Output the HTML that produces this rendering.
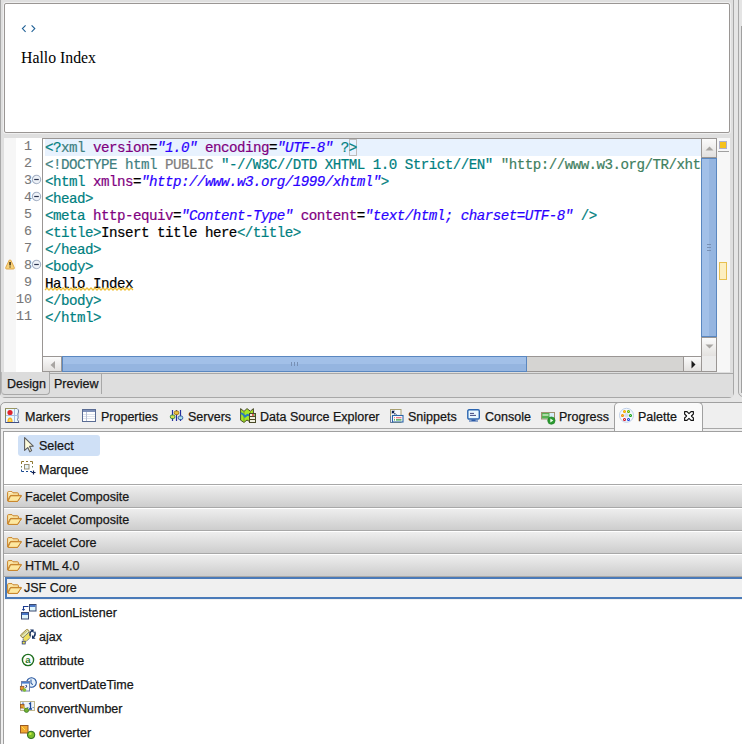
<!DOCTYPE html>
<html><head><meta charset="utf-8">
<style>
*{margin:0;padding:0;box-sizing:border-box}
html,body{width:742px;height:744px;overflow:hidden;background:#e6e6e6;font-family:"Liberation Sans",sans-serif;font-size:12.5px;color:#161616;-webkit-text-stroke:0.25px}
.a{position:absolute}
svg{position:absolute;overflow:visible}
#frame{left:0;top:-10px;width:734px;height:408px;border:1px solid #a8a8a8;border-radius:0 0 5px 5px;background:#dfdfdf}
#rframe{left:738px;top:-10px;width:20px;height:407px;border:1px solid #a8a8a8;border-radius:0 0 5px 5px;background:#e4e4e4}
#prev{left:4px;top:3px;width:726px;height:130px;border:1px solid #9a9694;border-radius:2px;background:#fff;box-shadow:0 0 0 1px #efefef}
#src{left:4px;top:138px;width:726px;height:234px;background:#f6f6f6}
#lnr{left:16px;top:138px;width:26px;height:234px;background:#fff}
#code{left:42px;top:138px;width:659px;height:218px;border-left:1px solid #9a9694;border-top:1px solid #9a9694;background:#fff;overflow:hidden}
.ln{position:absolute;left:0;width:32px;-webkit-text-stroke:0.1px;text-align:right;font-family:"Liberation Mono",monospace;font-size:13.33px;line-height:17px;color:#787878}
.cl{position:absolute;left:2px;margin-top:1px;-webkit-text-stroke:0.2px;white-space:pre;font-family:"Liberation Mono",monospace;font-size:14.2px;letter-spacing:-0.52px;line-height:17px;color:#000}
.t{color:#008080}.tn{color:#3f7f7f}.an{color:#7f007f}.av{color:#2a00ff;font-style:italic}.g{color:#808080}.sr{color:#3f7f5f}
#vsb{left:701px;top:138px;width:16px;height:218px;background:#e6e6e6;border:1px solid #9a9694;border-bottom:none}
.btn{position:absolute;background:linear-gradient(#fbfbfb,#e2e0de)}
#ovr{left:717px;top:138px;width:13px;height:234px;background:#f7f7f7}
#hsb{left:42px;top:356px;width:659px;height:16px;background:#d5d4d2;border:1px solid #9a9694;border-right:none}
#tabs1{left:1px;top:372px;width:732px;height:25px;background:#dedede}
#bpanel{left:0;top:402px;width:760px;height:360px;border:1px solid #a0a0a0;border-radius:5px 5px 0 0;background:#efefef}
#pal{left:3px;top:431px;width:760px;height:320px;border-left:1px solid #a0a0a0;border-top:1px solid #a0a0a0;background:#fff}
.tab{position:absolute;top:405px;height:25px;line-height:25px;white-space:nowrap}
.dr{position:absolute;left:4px;width:740px;height:23px;border-top:1px solid #a8a8a8;background:linear-gradient(#fff 0,#fff 1px,#eeeeee 1px,#cdcdcd 100%)}
.dr span{position:absolute;left:21px;top:5px;line-height:15px}
.it{position:absolute;left:39px;height:24px;line-height:24px}
</style></head><body>
<div class="a" id="frame"></div>
<div class="a" id="rframe"></div><div class="a" style="left:741px;top:26px;width:1px;height:367px;background:#a0a0a0"></div>
<div class="a" id="prev"></div>
<svg style="left:21px;top:24px" width="16" height="10" viewBox="0 0 16 10"><path d="M4.6 1.3 L1.4 4.6 L4.6 7.9 M10.6 1.3 L13.8 4.6 L10.6 7.9" fill="none" stroke="#1f6096" stroke-width="1.1"/></svg>
<div class="a" style="left:21px;top:49px;font-family:'Liberation Serif',serif;font-size:15.8px;color:#000;-webkit-text-stroke:0">Hallo Index</div>
<div class="a" id="src"></div>
<div class="a" id="lnr"></div>
<div class="a" style="left:0;top:138px">
<div class="ln" style="top:0">1</div>
<div class="ln" style="top:17px">2</div>
<div class="ln" style="top:34px">3</div>
<div class="ln" style="top:51px">4</div>
<div class="ln" style="top:68px">5</div>
<div class="ln" style="top:85px">6</div>
<div class="ln" style="top:102px">7</div>
<div class="ln" style="top:119px">8</div>
<div class="ln" style="top:136px">9</div>
<div class="ln" style="top:153px">10</div>
<div class="ln" style="top:170px">11</div>
</div>
<!-- fold markers -->
<svg style="left:32px;top:175px" width="10" height="10" viewBox="0 0 10 10"><circle cx="4.5" cy="4.5" r="4.2" fill="#eef2f8" stroke="#a4b0c4" stroke-width="1.1"/><path d="M2.2 4.5H6.8" stroke="#2a3450" stroke-width="1.2"/></svg>
<svg style="left:32px;top:192px" width="10" height="10" viewBox="0 0 10 10"><circle cx="4.5" cy="4.5" r="4.2" fill="#eef2f8" stroke="#a4b0c4" stroke-width="1.1"/><path d="M2.2 4.5H6.8" stroke="#2a3450" stroke-width="1.2"/></svg>
<svg style="left:32px;top:260px" width="10" height="10" viewBox="0 0 10 10"><circle cx="4.5" cy="4.5" r="4.2" fill="#eef2f8" stroke="#a4b0c4" stroke-width="1.1"/><path d="M2.2 4.5H6.8" stroke="#2a3450" stroke-width="1.2"/></svg>
<!-- warning -->
<svg style="left:5px;top:259px" width="10" height="11" viewBox="0 0 10 11"><path d="M5 0.8 Q5.6 0.8 6 1.6 L9.3 8.6 Q9.6 10 8.4 10 L1.6 10 Q0.4 10 0.7 8.6 L4 1.6 Q4.4 0.8 5 0.8Z" fill="#f7d27a" stroke="#dca040" stroke-width="0.9"/><rect x="4.3" y="3" width="1.5" height="3.4" fill="#3a2a10"/><rect x="4.3" y="7.3" width="1.5" height="1.4" fill="#7a6a40"/></svg>
<div class="a" id="code">
<div style="position:absolute;left:2px;top:0;width:657px;height:17px;background:#e8f2fe"></div>
<div style="position:absolute;left:306px;top:0;width:8px;height:17px;border:1px solid #bdbdbd"></div>
<div class="cl" style="top:0"><span class="t">&lt;?</span><span class="tn">xml</span> <span class="an">version</span>=<span class="av">"1.0"</span> <span class="an">encoding</span>=<span class="av">"UTF-8"</span> <span class="t">?&gt;</span></div>
<div class="cl" style="top:17px"><span class="tn">&lt;!DOCTYPE html</span> <span class="g">PUBLIC</span> <span class="t">"-//W3C//DTD XHTML 1.0 Strict//EN"</span> <span class="sr">"http://www.w3.org/TR/xhtml1/DTD/xhtml1-strict.dtd"&gt;</span></div>
<div class="cl" style="top:34px"><span class="t">&lt;html</span> <span class="an">xmlns</span>=<span class="av">"http://www.w3.org/1999/xhtml"</span><span class="t">&gt;</span></div>
<div class="cl" style="top:51px"><span class="t">&lt;head&gt;</span></div>
<div class="cl" style="top:68px"><span class="t">&lt;meta</span> <span class="an">http-equiv</span>=<span class="av">"Content-Type"</span> <span class="an">content</span>=<span class="av">"text/html; charset=UTF-8"</span> <span class="t">/&gt;</span></div>
<div class="cl" style="top:85px"><span class="t">&lt;title&gt;</span>Insert title here<span class="t">&lt;/title&gt;</span></div>
<div class="cl" style="top:102px"><span class="t">&lt;/head&gt;</span></div>
<div class="cl" style="top:119px"><span class="t">&lt;body&gt;</span></div>
<div class="cl" style="top:136px">Hallo Index</div>
<div class="cl" style="top:153px"><span class="t">&lt;/body&gt;</span></div>
<div class="cl" style="top:170px"><span class="t">&lt;/html&gt;</span></div>
<svg style="left:2px;top:148px" width="89" height="4" viewBox="0 0 89 4"><path d="M0 3 L2 1 L4 3 L6 1 L8 3 L10 1 L12 3 L14 1 L16 3 L18 1 L20 3 L22 1 L24 3 L26 1 L28 3 L30 1 L32 3 L34 1 L36 3 L38 1 L40 3 L42 1 L44 3 L46 1 L48 3 L50 1 L52 3 L54 1 L56 3 L58 1 L60 3 L62 1 L64 3 L66 1 L68 3 L70 1 L72 3 L74 1 L76 3 L78 1 L80 3 L82 1 L84 3 L86 1 L88 3" fill="none" stroke="#efbf38" stroke-width="1.3"/></svg>
</div>
<div class="a" id="vsb">
<div class="btn" style="left:0;top:0;width:14px;height:19px;border-bottom:1px solid #9a9694"></div>
<svg style="left:3px;top:7px" width="9" height="5" viewBox="0 0 9 5"><path d="M0.5 4.5 L4.5 0.5 L8.5 4.5Z" fill="#a8a5a2"/></svg>
<div style="position:absolute;left:-1px;top:19px;width:16px;height:179px;background:linear-gradient(90deg,#a2c0e8 0,#a2c0e8 50%,#95b5e0 50%,#95b5e0 100%);border:1px solid #5a87c0"></div>
<div style="position:absolute;left:5px;top:105px;width:4px;height:1px;background:#7890b4;box-shadow:0 3px 0 #7890b4,0 6px 0 #7890b4"></div><div class="btn" style="left:0;top:198px;width:14px;height:20px;border-top:1px solid #9a9694"></div>
<svg style="left:3px;top:205px" width="9" height="5" viewBox="0 0 9 5"><path d="M0.5 0.5 L4.5 4.5 L8.5 0.5Z" fill="#a8a5a2"/></svg>
</div>
<div class="a" id="ovr"><div style="position:absolute;left:2px;top:3px;width:8px;height:8px;background:#f6c21c;border:1px solid #b0b0c8"></div><div style="position:absolute;left:1px;top:13px;width:11px;height:1px;background:#a0a0a0"></div><div style="position:absolute;left:2px;top:124px;width:8px;height:18px;background:#fdefc0;border:1px solid #e8c050"></div></div>
<div class="a" id="hsb">
<div class="btn" style="left:0;top:0;width:19px;height:14px;border-right:1px solid #9a9694"></div>
<svg style="left:7px;top:4px" width="5" height="8" viewBox="0 0 5 8"><path d="M5 0 L0.5 4 L5 8Z" fill="#a8a5a2"/></svg>
<div style="position:absolute;left:19px;top:-1px;width:465px;height:16px;background:linear-gradient(#a2c0e8 0,#a2c0e8 50%,#95b5e0 50%,#95b5e0 100%);border:1px solid #5a87c0"></div><div style="position:absolute;left:248px;top:5px;width:1px;height:4px;background:#7890b4;box-shadow:3px 0 0 #7890b4,6px 0 0 #7890b4"></div>
<div class="btn" style="left:640px;top:0;width:18px;height:14px;border-left:1px solid #9a9694"></div>
<svg style="left:648px;top:3px" width="5" height="9" viewBox="0 0 5 9"><path d="M0.5 0.5 L4.5 4.5 L0.5 8.5Z" fill="#1a1a1a"/></svg>
</div>
<div class="a" style="left:701px;top:356px;width:16px;height:16px;background:#ebebeb;border-left:1px solid #9a9694;border-right:1px solid #9a9694;border-bottom:1px solid #9a9694"></div>
<div class="a" id="tabs1"></div>
<div class="a" style="left:49px;top:373px;width:684px;height:1px;background:#a8a8a8"></div>
<div class="a" style="left:1px;top:372px;width:49px;height:23px;border-left:1px solid #b8b8b8;border-right:1px solid #a8a8a8;border-bottom:1px solid #a8a8a8;border-radius:0 0 4px 4px;background:#dcdcdc"></div>
<div class="a" style="left:101px;top:374px;width:1px;height:20px;background:#a8a8a8"></div>
<div class="a" style="left:7px;top:374px;height:20px;line-height:20px">Design</div>
<div class="a" style="left:54px;top:374px;height:20px;line-height:20px">Preview</div>
<div class="a" id="bpanel"></div>
<div class="a" style="left:1px;top:428px;width:760px;height:1px;background:#a8a8a8"></div>
<div class="a" style="left:614px;top:402px;width:89px;height:30px;border:1px solid #a0a0a0;border-bottom:none;border-radius:5px 5px 0 0;background:#fafafa"></div>
<div class="a" id="pal"></div>
<!-- Markers icon -->
<svg style="left:5px;top:408px" width="15" height="15" viewBox="0 0 15 15">
<path d="M0.5 0.5 H12 Q14 1.5 13.5 4 Q12.5 6 13 8 Q13.5 10 12.5 11.5 L14 14.5 H0.5Z" fill="#eaf8fe" stroke="#6d7aa0" stroke-width="1"/>
<path d="M0.5 0.5 H11.5" stroke="#9a9660" stroke-width="1"/><path d="M0.5 0.5 V10" stroke="#8a8a50" stroke-width="1"/>
<path d="M1 7.5 H13 M9.5 1 V14" stroke="#a8bce0" stroke-width="1"/>
<circle cx="5" cy="4.5" r="2.6" fill="#e0242c"/>
<path d="M2.4 14 Q2.4 9.5 5 9.5 Q7.6 9.5 7.6 14Z" fill="#f8b020"/>
<path d="M3.4 13.5 Q3.6 11 5 11 Q6.4 11 6.6 13.5Z" fill="#fde060"/>
<path d="M0.5 14.5 H14" stroke="#404e80" stroke-width="1"/>
</svg>
<div class="tab" style="left:25px">Markers</div>
<!-- Properties icon -->
<svg style="left:82px;top:409px" width="14" height="13" viewBox="0 0 14 13">
<rect x="0.5" y="0.5" width="13" height="12" fill="#fff" stroke="#5a6c94"/>
<rect x="1" y="1" width="12" height="2" fill="#7e90b8"/>
<path d="M1 5.5H13 M1 7.5H13 M1 9.5H13" stroke="#dde2ec" stroke-width="1"/>
<path d="M4.5 3 V12" stroke="#b8c0d4" stroke-width="1"/>
</svg>
<div class="tab" style="left:101px">Properties</div>
<!-- Servers icon -->
<svg style="left:170px;top:409px" width="14" height="13" viewBox="0 0 14 13">
<path d="M2.5 1V12 M6.5 1V12 M10.5 1V12" stroke="#2430a0" stroke-width="1.2"/>
<rect x="0.3" y="6" width="4.6" height="3.6" rx="1.6" fill="#d8e050" stroke="#2a8040" stroke-width="0.9"/>
<rect x="4.2" y="2" width="4.6" height="3.6" rx="1.6" fill="#e8c040" stroke="#a07010" stroke-width="0.9"/>
<rect x="8.2" y="7" width="4.6" height="3.6" rx="1.6" fill="#a8e0e8" stroke="#3050a0" stroke-width="0.9"/>
</svg>
<div class="tab" style="left:188px">Servers</div>
<!-- DSE icon -->
<svg style="left:240px;top:408px" width="16" height="15" viewBox="0 0 16 15">
<path d="M0.6 0.6 L4 3.4 L7 0.6 L10.4 3.2 L13.4 0.6 L13.4 12 L10.4 14.2 L7 12 L4 14.4 L0.6 12.2Z" fill="#a8e828" stroke="#4a4a30" stroke-width="1"/>
<path d="M4 3.4V14.4 M10.4 3.2V14.2" stroke="#78a820" stroke-width="1"/>
<path d="M0.8 5.2 L3 6.2 L5 8.6 L7.5 6.8 L10 7.6" fill="none" stroke="#2a7ac0" stroke-width="2"/>
<rect x="9.5" y="5.5" width="6" height="9" fill="#efefdf" stroke="#4a4a28" stroke-width="1"/>
<path d="M9.5 8.5H15.5 M9.5 11.5H15.5" stroke="#4a4a28" stroke-width="1"/>
<circle cx="13" cy="7" r="0.9" fill="#e02020"/><circle cx="14.4" cy="7" r="0.7" fill="#40c040"/>
</svg>
<div class="tab" style="left:260px">Data Source Explorer</div>
<!-- Snippets icon -->
<svg style="left:390px;top:409px" width="14" height="14" viewBox="0 0 14 14">
<rect x="0.5" y="0.5" width="10.5" height="13" fill="#f6f8fc" stroke="#a8a070" stroke-width="1"/>
<path d="M0.5 7 V13.5 H3" stroke="#6a7ca0" stroke-width="1" fill="none"/>
<path d="M3 3 L6.5 6.5" stroke="#102050" stroke-width="1.3" stroke-dasharray="1.3 0.7"/><path d="M1.8 1.8 H5 L1.8 5Z" fill="#0a1a48"/>
<rect x="2.5" y="6.5" width="10.5" height="6.5" fill="#fff" stroke="#2a64a8" stroke-width="1.1"/>
<path d="M4 8.7H5 M6 8.7H11.5" stroke="#e85060" stroke-width="1.1"/>
<path d="M4 10.9H5 M6 10.9H11.5" stroke="#30a040" stroke-width="1.1"/>
</svg>
<div class="tab" style="left:408px">Snippets</div>
<!-- Console icon -->
<svg style="left:467px;top:409px" width="13" height="13" viewBox="0 0 13 13">
<rect x="0.8" y="0.8" width="11.5" height="9.2" rx="1.2" fill="#e8f8ff" stroke="#2a64b0" stroke-width="1.4"/>
<path d="M3 4.4H7 M3 6.4H9" stroke="#404880" stroke-width="1"/>
<path d="M4.5 10.5H8.5 V11.5 H11 V12.5 H2 V11.5 H4.5Z" fill="#2a5aa8"/>
</svg>
<div class="tab" style="left:485px">Console</div>
<!-- Progress icon -->
<svg style="left:541px;top:412px" width="15" height="13" viewBox="0 0 15 13">
<rect x="0.5" y="0.5" width="13" height="6.5" fill="#d8eefa" stroke="#a09070" stroke-width="1"/>
<rect x="1" y="1" width="7.5" height="5.5" fill="#58b050"/>
<path d="M1.5 3H7.5" stroke="#e8f8e0" stroke-width="1.2"/>
<circle cx="10.4" cy="8.6" r="3.7" fill="#2a9a30" stroke="#1a7a20" stroke-width="0.6"/>
<path d="M9.3 6.6 L12.3 8.6 L9.3 10.6Z" fill="#f0fff0"/>
</svg>
<div class="tab" style="left:559px">Progress</div>
<!-- Palette icon -->
<svg style="left:619px;top:408px" width="15" height="15" viewBox="0 0 15 15">
<circle cx="7.5" cy="7.3" r="7" fill="#f4f8fe" stroke="#c0d0e8" stroke-width="1"/>
<circle cx="7.5" cy="7.3" r="2.2" fill="#d8e0ec"/>
<circle cx="5.5" cy="3.4" r="1.5" fill="#f0a000"/><circle cx="5.5" cy="3.4" r="0.5" fill="#ffee00"/>
<circle cx="9.5" cy="3.4" r="1.5" fill="#60b000"/><circle cx="9.5" cy="3.4" r="0.5" fill="#e0f080"/>
<circle cx="3.5" cy="7.4" r="1.5" fill="#f08800"/><circle cx="3.5" cy="7.4" r="0.5" fill="#ffd040"/>
<circle cx="11.5" cy="7.4" r="1.5" fill="#10a010"/><circle cx="11.5" cy="7.4" r="0.5" fill="#c0f0c0"/>
<circle cx="5.5" cy="11.5" r="1.5" fill="#d01020"/><circle cx="5.5" cy="11.5" r="0.5" fill="#fff"/>
<circle cx="9.5" cy="11.5" r="1.5" fill="#1040e0"/><circle cx="9.5" cy="11.5" r="0.5" fill="#fff"/>
</svg>
<div class="tab" style="left:638px">Palette</div>
<!-- close -->
<svg style="left:684px;top:411px" width="10" height="10" viewBox="0 0 10 10"><path d="M0.6 0.6 H3 L5 2.6 L7 0.6 H9.4 V3 L7.4 5 L9.4 7 V9.4 H7 L5 7.4 L3 9.4 H0.6 V7 L2.6 5 L0.6 3Z" fill="#fff" stroke="#111" stroke-width="1.1" stroke-linejoin="round"/></svg>
<!-- palette content -->
<div class="a" style="left:18px;top:435px;width:82px;height:21px;background:#cfe0f6;border-radius:3px"></div>
<svg style="left:24px;top:437px" width="10" height="16" viewBox="0 0 10 16"><path d="M0.6 0.6 L9.3 9.2 L5.6 9.4 L7.6 13.6 L5.8 14.8 L3.8 10.6 L0.6 13.4Z" fill="#fdfbdc" stroke="#5e5e5e" stroke-width="1.1" stroke-linejoin="round"/></svg>
<div class="it" style="top:434px">Select</div>
<svg style="left:21px;top:461px" width="15" height="15" viewBox="0 0 15 15">
<path d="M0.5 3V0.5H3 M5 0.5H7 M9 0.5H11.5V3" fill="none" stroke="#907830" stroke-width="1"/>
<path d="M0.5 5V6.5 M11.5 5V6.5" stroke="#708050" stroke-width="1"/>
<path d="M0.5 8.5V10.5H3 M5 10.5H7 M9 10.5H11" fill="none" stroke="#1a4a90" stroke-width="1"/>
<rect x="3.5" y="3.5" width="4.5" height="4.5" fill="#e8f4f8" stroke="#9a9070" stroke-width="1"/>
<path d="M10.5 11.5H14.5 M12.5 9.5V13.5" stroke="#102050" stroke-width="1.2"/>
</svg>
<div class="it" style="top:458px">Marquee</div>
<!-- drawers -->
<div class="dr" style="top:484px"><span>Facelet Composite</span></div>
<div class="dr" style="top:507px"><span>Facelet Composite</span></div>
<div class="dr" style="top:530px"><span>Facelet Core</span></div>
<div class="dr" style="top:553px"><span>HTML 4.0</span></div>
<div class="a" style="left:4px;top:576px;width:740px;height:24px;border-top:1px solid #a8a8a8;background:#f2f2f2"></div>
<div class="a" style="left:5px;top:577px;width:740px;height:22px;border:2px solid #4a7ab8;border-right:none;background:#f0f0f0"></div>
<div class="a" style="left:24px;top:581px;line-height:15px">JSF Core</div>
<svg style="left:7px;top:491px" width="15" height="11" viewBox="0 0 15 11"><path d="M0.6 9.8 V1.6 Q0.6 0.6 1.6 0.6 H5 L6 1.8 H10.6 Q11.4 1.8 11.4 2.8 V4.4 H4 Q3.2 4.4 2.8 5.2 L0.6 10 Q0.8 10.4 1.4 10.4 H10.6 L14.4 4.6 Q14.2 4.4 13.8 4.4 H11.4" fill="#fbe7a8" stroke="#c8842a" stroke-width="1"/><path d="M1.2 10.2 L3.8 5 H14 L10.4 10.2Z" fill="#fde8a0"/><path d="M1 10.2 L3.6 4.8 M3.6 4.8 H14.3 L10.5 10.4 H1.2" fill="none" stroke="#c8842a" stroke-width="1"/><path d="M1.6 1.4 H4.6" stroke="#fff" stroke-width="0.8"/></svg>
<svg style="left:7px;top:514px" width="15" height="11" viewBox="0 0 15 11"><path d="M0.6 9.8 V1.6 Q0.6 0.6 1.6 0.6 H5 L6 1.8 H10.6 Q11.4 1.8 11.4 2.8 V4.4 H4 Q3.2 4.4 2.8 5.2 L0.6 10 Q0.8 10.4 1.4 10.4 H10.6 L14.4 4.6 Q14.2 4.4 13.8 4.4 H11.4" fill="#fbe7a8" stroke="#c8842a" stroke-width="1"/><path d="M1.2 10.2 L3.8 5 H14 L10.4 10.2Z" fill="#fde8a0"/><path d="M1 10.2 L3.6 4.8 M3.6 4.8 H14.3 L10.5 10.4 H1.2" fill="none" stroke="#c8842a" stroke-width="1"/></svg>
<svg style="left:7px;top:537px" width="15" height="11" viewBox="0 0 15 11"><path d="M0.6 9.8 V1.6 Q0.6 0.6 1.6 0.6 H5 L6 1.8 H10.6 Q11.4 1.8 11.4 2.8 V4.4 H4 Q3.2 4.4 2.8 5.2 L0.6 10 Q0.8 10.4 1.4 10.4 H10.6 L14.4 4.6 Q14.2 4.4 13.8 4.4 H11.4" fill="#fbe7a8" stroke="#c8842a" stroke-width="1"/><path d="M1.2 10.2 L3.8 5 H14 L10.4 10.2Z" fill="#fde8a0"/><path d="M1 10.2 L3.6 4.8 M3.6 4.8 H14.3 L10.5 10.4 H1.2" fill="none" stroke="#c8842a" stroke-width="1"/></svg>
<svg style="left:7px;top:560px" width="15" height="11" viewBox="0 0 15 11"><path d="M0.6 9.8 V1.6 Q0.6 0.6 1.6 0.6 H5 L6 1.8 H10.6 Q11.4 1.8 11.4 2.8 V4.4 H4 Q3.2 4.4 2.8 5.2 L0.6 10 Q0.8 10.4 1.4 10.4 H10.6 L14.4 4.6 Q14.2 4.4 13.8 4.4 H11.4" fill="#fbe7a8" stroke="#c8842a" stroke-width="1"/><path d="M1.2 10.2 L3.8 5 H14 L10.4 10.2Z" fill="#fde8a0"/><path d="M1 10.2 L3.6 4.8 M3.6 4.8 H14.3 L10.5 10.4 H1.2" fill="none" stroke="#c8842a" stroke-width="1"/></svg>
<svg style="left:7px;top:583px" width="15" height="11" viewBox="0 0 15 11"><path d="M0.6 9.8 V1.6 Q0.6 0.6 1.6 0.6 H5 L6 1.8 H10.6 Q11.4 1.8 11.4 2.8 V4.4 H4 Q3.2 4.4 2.8 5.2 L0.6 10 Q0.8 10.4 1.4 10.4 H10.6 L14.4 4.6 Q14.2 4.4 13.8 4.4 H11.4" fill="#fbe7a8" stroke="#c8842a" stroke-width="1"/><path d="M1.2 10.2 L3.8 5 H14 L10.4 10.2Z" fill="#fde8a0"/><path d="M1 10.2 L3.6 4.8 M3.6 4.8 H14.3 L10.5 10.4 H1.2" fill="none" stroke="#c8842a" stroke-width="1"/></svg>
<!-- items -->
<svg style="left:21px;top:604px" width="16" height="16" viewBox="0 0 16 16">
<rect x="8.5" y="0.5" width="6.5" height="6.5" fill="#e0f6fc" stroke="#3a4a70" stroke-width="1"/><rect x="9" y="1" width="5.5" height="2" fill="#4a78c8"/>
<rect x="0.5" y="8.5" width="7" height="6.5" fill="#e0f6fc" stroke="#3a4a70" stroke-width="1"/><rect x="1" y="9" width="6" height="2" fill="#4a78c8"/>
<path d="M7.5 2.5H2.5V6" fill="none" stroke="#1a3a90" stroke-width="1.1"/><path d="M0.8 5 L2.5 7 L4.2 5Z" fill="#1a3a90"/>
</svg>
<div class="it" style="top:601px">actionListener</div>
<svg style="left:20px;top:629px" width="17" height="16" viewBox="0 0 17 16">
<path d="M0.5 6 L6.5 0.5 Q8 0.2 8.8 1.5 L9.2 3 L3 8.8 Q1.2 8.6 0.5 6Z" fill="#e6ecb8" stroke="#9a8440" stroke-width="1"/>
<path d="M1.5 6.5 L7.5 1.5" stroke="#b0a050" stroke-width="0.8"/>
<path d="M3 8.8 L9.2 3 L10.5 4.5 Q11 7.5 10 9 L5.5 13 L3.5 13.2Z" fill="#eee060" stroke="#58608a" stroke-width="0.9" stroke-dasharray="1.2 0.6"/>
<rect x="2.2" y="12.2" width="3" height="2.8" fill="#f2e840" stroke="#2a3a80" stroke-width="0.8"/>
<path d="M11.8 2 Q9.2 3.5 10.2 7.2" fill="none" stroke="#0e2a5e" stroke-width="1.3"/><path d="M10 0.4 L13.6 0.4 L13.6 4Z" fill="#0e2a5e"/><path d="M13.6 8 Q16 6 14.8 2.6" fill="none" stroke="#0e2a5e" stroke-width="1.3"/><path d="M12 6 L12 9.8 L15.6 9.8Z" fill="#0e2a5e"/>

</svg>
<div class="it" style="top:625px">ajax</div>
<svg style="left:21px;top:653px" width="14" height="14" viewBox="0 0 14 14"><circle cx="7" cy="7" r="5.6" fill="#fff" stroke="#1e6e1e" stroke-width="1.4"/><text x="7" y="10.2" text-anchor="middle" font-family="Liberation Sans" font-size="9.5" font-weight="bold" fill="#2a7a2a">a</text></svg>
<div class="it" style="top:649px">attribute</div>
<svg style="left:20px;top:677px" width="17" height="15" viewBox="0 0 17 15">
<circle cx="11.5" cy="5.5" r="4.8" fill="#e4f0fa" stroke="#1e4e9a" stroke-width="1.1"/><path d="M11 2.5V6.5 L13 7.5" fill="none" stroke="#1e4e9a" stroke-width="1"/>
<rect x="1.5" y="4.5" width="8" height="9.5" fill="#f4f8fc" stroke="#7080a8" stroke-width="1"/><rect x="2" y="5" width="7" height="1.6" fill="#4a80d0"/>
<path d="M5.5 8.5 Q6.5 8 7 9 L5.5 11" fill="none" stroke="#1a3070" stroke-width="0.9"/>
<rect x="0.3" y="9.3" width="3.6" height="3.6" fill="#e89a30" stroke="#905020" stroke-width="0.7"/><circle cx="4.5" cy="13" r="1.8" fill="#80c030"/>
</svg>
<div class="it" style="top:673px">convertDateTime</div>
<svg style="left:20px;top:701px" width="15" height="12" viewBox="0 0 15 12">
<rect x="0.5" y="0.5" width="14" height="9" fill="#eef4fa" stroke="#c0b890" stroke-width="1"/>
<path d="M9 3 L10.5 2 V8 M9 8H12" fill="none" stroke="#1a4a9a" stroke-width="1.3"/>
<path d="M3 1.5V3" stroke="#1a4a9a" stroke-width="1"/><path d="M7 6.5H8.5 M12.5 6.5H14" stroke="#6080b0" stroke-width="0.8"/>
<rect x="0.5" y="3.5" width="3.5" height="3.5" fill="#e89a30" stroke="#905020" stroke-width="0.8"/><path d="M3 5.5 L6 9" stroke="#d0c030" stroke-width="1.2"/><circle cx="6.5" cy="9.3" r="2.2" fill="#70b030" stroke="#2a6a20" stroke-width="0.6"/>
</svg>
<div class="it" style="top:697px;left:37px">convertNumber</div>
<svg style="left:20px;top:725px" width="16" height="15" viewBox="0 0 16 15">
<path d="M6 6 L10 10" stroke="#e0c040" stroke-width="2.4"/>
<rect x="0.5" y="0.5" width="7.5" height="7.5" fill="#f2a830" stroke="#9a5a22" stroke-width="1"/><path d="M1.8 1.8 L5 5" stroke="#ffe050" stroke-width="1"/>
<circle cx="11.1" cy="9.9" r="3.7" fill="#7cbc2c" stroke="#2a6a1e" stroke-width="1"/><circle cx="10.3" cy="8.8" r="1.3" fill="#c8f040"/>
</svg>
<div class="it" style="top:721px">converter</div>
</body></html>
